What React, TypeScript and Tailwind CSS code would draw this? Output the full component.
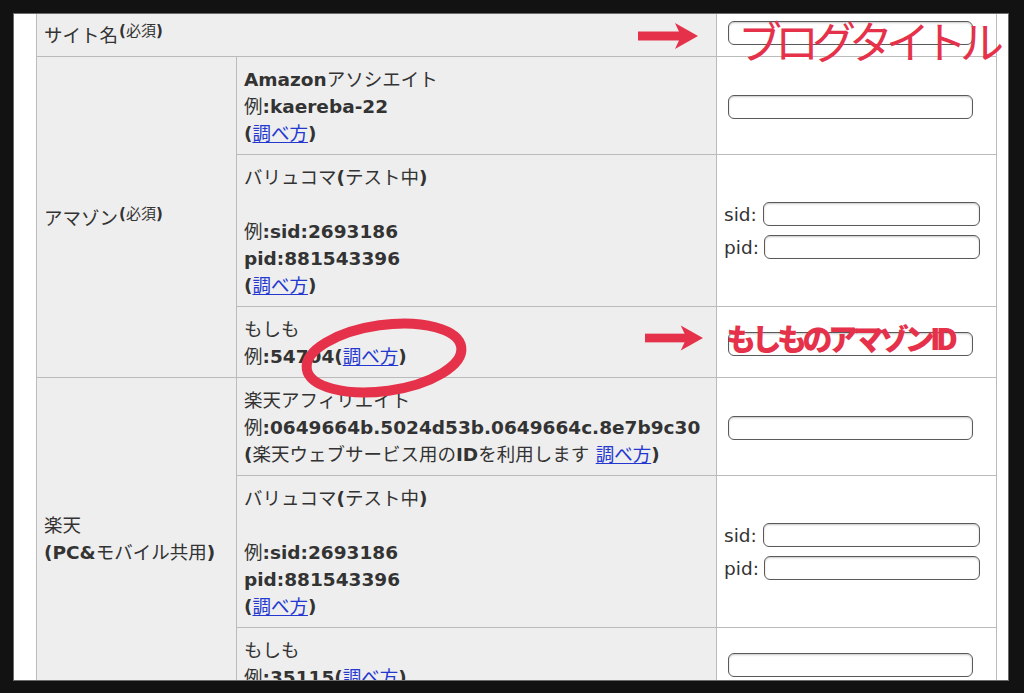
import React from "react";

// ASCII runs are bold (like Verdana bold in the capture), Japanese stays regular
function Mixed({ text }: { text: string }) {
    const parts = text.split(/([\x20-\x7e]+)/);
    return (
        <>
            {parts.map((p, i) =>
                /^[\x20-\x7e]+$/.test(p) ? (
                    <b key={i} className="font-bold">
                        {p}
                    </b>
                ) : (
                    <React.Fragment key={i}>{p}</React.Fragment>
                )
            )}
        </>
    );
}

function HowTo() {
    return <a className="cursor-pointer text-[#2438d0] underline underline-offset-2">調べ方</a>;
}

function Required() {
    return (
        <span className="relative -top-[6px] ml-[1px] text-[15px] leading-none">
            <Mixed text="(必須)" />
        </span>
    );
}

function Field({ w = "w-[245px]" }: { w?: string }) {
    return (
        <input
            type="text"
            className={`h-[24px] ${w} rounded-[6px] border border-[#5a5a5a] bg-white align-middle shadow-[inset_0_1px_2px_rgba(0,0,0,0.22)]`}
        />
    );
}

function SidPid() {
    return (
        <div className="font-normal">
            <div className="flex h-[33px] items-center">
                <span className="mr-[6px]">sid:</span>
                <Field w="w-[217px]" />
            </div>
            <div className="flex h-[33px] items-center">
                <span className="mr-[5px]">pid:</span>
                <Field w="w-[216px]" />
            </div>
        </div>
    );
}

function Arrow({ className }: { className: string }) {
    return (
        <svg viewBox="0 0 60 26" className={`absolute ${className}`}>
            <rect x="0" y="8.5" width="44" height="9" fill="#e5324a" />
            <polygon points="37,0 60,13 37,26 43,13" fill="#e5324a" />
        </svg>
    );
}

const headCell = "border border-[#bbb] bg-[#eee] pl-[7px] pr-2 pt-[9px] pb-[7px] text-left align-middle font-normal";
const labelCell = "border border-[#bbb] bg-[#eee] pl-[7px] pr-2 pt-[9px] pb-[7px] text-left align-top";
const inputCell = "border border-[#bbb] bg-white pl-[11px] align-middle";
const pairCell = "border border-[#bbb] bg-white pl-[7px] align-middle";

export default function App() {
    return (
        <div className="relative h-[693px] w-[1024px] overflow-hidden bg-[#121212] pl-[14px] pt-[14px]">
            <div className="h-[666px] w-[994px] overflow-hidden bg-white pl-[22px] shadow-[0_0_0_1px_#6b6b6b]">
                <table className="-mt-[2px] w-[960px] table-fixed border-collapse font-['DejaVu_Sans','Noto_Sans_CJK_JP',sans-serif] text-[18.5px] leading-[27px] text-[#333]">
                    <colgroup>
                        <col className="w-[200px]" />
                        <col className="w-[480px]" />
                        <col className="w-[280px]" />
                    </colgroup>
                    <tbody>
                        <tr>
                            <th colSpan={2} className={headCell}>
                                サイト名
                                <Required />
                            </th>
                            <td className={`${inputCell} pb-[6px]`}>
                                <Field />
                            </td>
                        </tr>

                        {/* アマゾン */}
                        <tr>
                            <th rowSpan={3} className={headCell}>
                                アマゾン
                                <Required />
                            </th>
                            <td className={labelCell}>
                                <Mixed text="Amazonアソシエイト" />
                                <br />
                                <Mixed text="例:kaereba-22" />
                                <br />
                                <b>(</b>
                                <HowTo />
                                <b>)</b>
                            </td>
                            <td className={inputCell}>
                                <Field />
                            </td>
                        </tr>
                        <tr>
                            <td className={labelCell}>
                                <Mixed text="バリュコマ(テスト中)" />
                                <br />
                                <br />
                                <Mixed text="例:sid:2693186" />
                                <br />
                                <Mixed text="pid:881543396" />
                                <br />
                                <b>(</b>
                                <HowTo />
                                <b>)</b>
                            </td>
                            <td className={pairCell}>
                                <SidPid />
                            </td>
                        </tr>
                        <tr>
                            <td className={labelCell}>
                                もしも
                                <br />
                                <Mixed text="例:54704(" />
                                <HowTo />
                                <b>)</b>
                            </td>
                            <td className={inputCell}>
                                <Field />
                            </td>
                        </tr>

                        {/* 楽天 */}
                        <tr>
                            <th rowSpan={3} className={headCell}>
                                楽天
                                <br />
                                <Mixed text="(PC&モバイル共用)" />
                            </th>
                            <td className={labelCell}>
                                楽天アフィリエイト
                                <br />
                                <Mixed text="例:0649664b.5024d53b.0649664c.8e7b9c30" />
                                <br />
                                <Mixed text="(楽天ウェブサービス用のIDを利用します " />
                                <HowTo />
                                <b>)</b>
                            </td>
                            <td className={inputCell}>
                                <Field />
                            </td>
                        </tr>
                        <tr>
                            <td className={labelCell}>
                                <Mixed text="バリュコマ(テスト中)" />
                                <br />
                                <br />
                                <Mixed text="例:sid:2693186" />
                                <br />
                                <Mixed text="pid:881543396" />
                                <br />
                                <b>(</b>
                                <HowTo />
                                <b>)</b>
                            </td>
                            <td className={pairCell}>
                                <SidPid />
                            </td>
                        </tr>
                        <tr>
                            <td className={labelCell}>
                                もしも
                                <br />
                                <Mixed text="例:35115(" />
                                <HowTo />
                                <b>)</b>
                            </td>
                            <td className={inputCell}>
                                <Field />
                            </td>
                        </tr>
                    </tbody>
                </table>
            </div>

            {/* red annotations */}
            <Arrow className="left-[637px] top-[23px] h-[26px] w-[62px]" />
            <Arrow className="left-[645px] top-[325px] h-[26px] w-[58px]" />
            <div className="absolute left-[738px] top-[12px] font-['Noto_Sans_CJK_JP',sans-serif] text-[44px] font-normal leading-[56px] tracking-[-7px] text-[#e5324a]">
                ブログタイトル
            </div>
            <div className="absolute left-[726px] top-[317px] font-['Noto_Sans_CJK_JP',sans-serif] text-[30px] font-black leading-[40px] tracking-[-4.5px] text-[#e5324a]">
                もしものアマゾンID
            </div>
            <svg viewBox="0 0 180 95" className="absolute left-[296px] top-[311px] h-[95px] w-[180px]">
                <ellipse
                    cx="88"
                    cy="47"
                    rx="78"
                    ry="33"
                    transform="rotate(-8 88 47)"
                    fill="none"
                    stroke="#e5324a"
                    strokeWidth="10"
                />
            </svg>
        </div>
    );
}
